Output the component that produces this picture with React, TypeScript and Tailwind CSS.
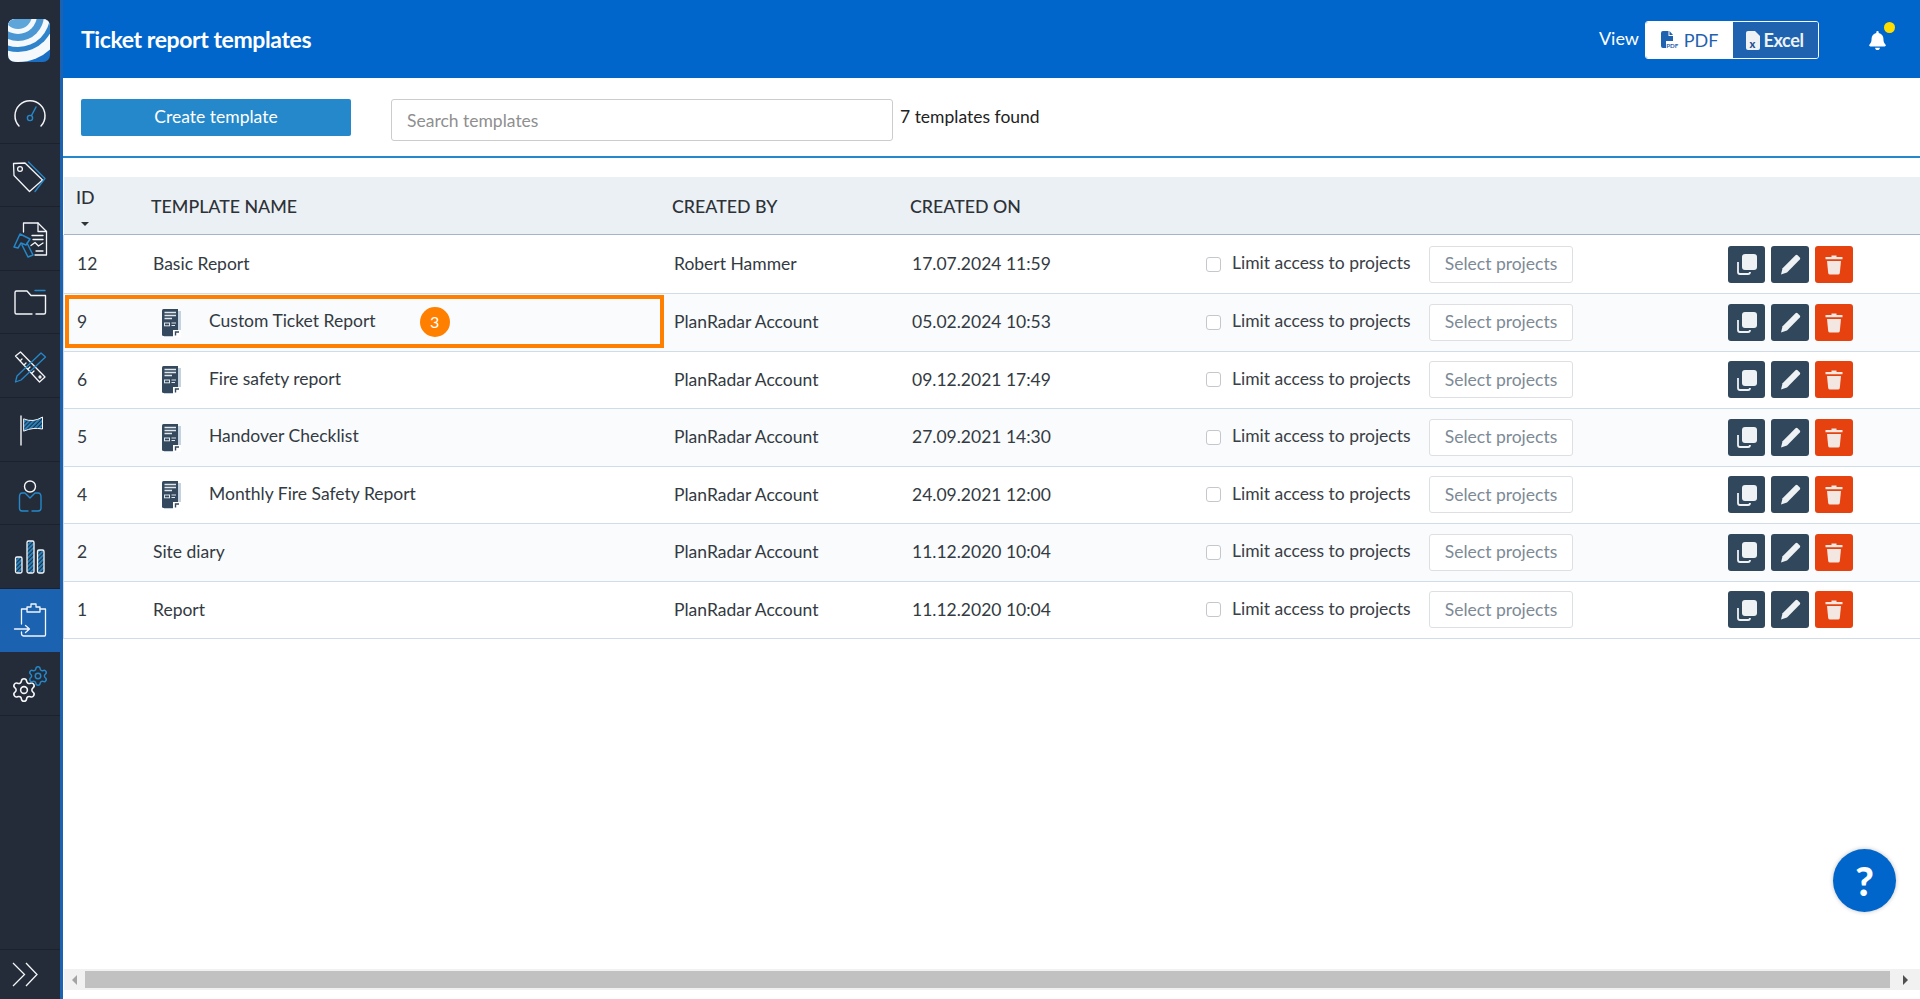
import React from 'react';
import { Settings } from 'lucide-react';
import { FaBell } from 'react-icons/fa';

const rows = [
  { id: '12', name: 'Basic Report', by: 'Robert Hammer', on: '17.07.2024 11:59', doc: false },
  { id: '9', name: 'Custom Ticket Report', by: 'PlanRadar Account', on: '05.02.2024 10:53', doc: true, mark: true },
  { id: '6', name: 'Fire safety report', by: 'PlanRadar Account', on: '09.12.2021 17:49', doc: true },
  { id: '5', name: 'Handover Checklist', by: 'PlanRadar Account', on: '27.09.2021 14:30', doc: true },
  { id: '4', name: 'Monthly Fire Safety Report', by: 'PlanRadar Account', on: '24.09.2021 12:00', doc: true },
  { id: '2', name: 'Site diary', by: 'PlanRadar Account', on: '11.12.2020 10:04', doc: false },
  { id: '1', name: 'Report', by: 'PlanRadar Account', on: '11.12.2020 10:04', doc: false },
];

const W = '#f4f6f8';
const B = '#2488ca';

const Hatch = ({ id }: { id: string }) => (
  <defs>
    <pattern id={id} width="3" height="3" patternUnits="userSpaceOnUse" patternTransform="rotate(45)">
      <rect width="3" height="3" fill="#252c39" />
      <rect width="1.8" height="3" fill={B} />
    </pattern>
  </defs>
);

const Ico = ({ children }: { children: React.ReactNode }) => (
  <svg width="60" height="64" viewBox="0 0 60 64" fill="none" strokeWidth="1.3" strokeLinecap="round" strokeLinejoin="round">
    {children}
  </svg>
);

const navIcons = [
  <Ico key="gauge">
    <path d="M19 46 A15 15 0 1 1 41 46" stroke={W} strokeWidth="1.5" />
    <path d="M31.5 35.5 L36 27" stroke={B} strokeWidth="1.5" />
    <circle cx="30" cy="38" r="2.6" stroke={B} strokeWidth="1.4" />
  </Ico>,
  <Ico key="tag">
    <path d="M13.5 19.5 L25 19 L42.5 36 L29.5 47.5 L14 31.5 Z" stroke={W} />
    <circle cx="20" cy="25" r="2.4" stroke={W} />
    <path d="M28.5 18 L45 34.5 L35 47.5" stroke={B} />
  </Ico>,
  <Ico key="doc">
    <path d="M23.5 25 V16 H38 L46.5 24.5 V48 H35" stroke={W} />
    <path d="M38 16 V24.5 H46.5 M32 28.5 H43 M33 32.5 H43 M36 44 H43" stroke={W} />
    <path d="M31 38.5 L35 35.5 L38.5 39 L43 36" stroke={W} />
    <path d="M14 40 L20 27 L30 32 L26 38 L21 36 L18 41 Z M22 38 L28 50 L33 48 L27 36" stroke={B} strokeWidth="1.5" />
  </Ico>,
  <Ico key="folder">
    <path d="M32 43 H16.5 Q15 43 15 41.5 V21.5 Q15 20 16.5 20 H27 L31 24.5 H45.5 V41.5 Q45.5 43 44 43 H36" stroke={W} strokeWidth="1.4" />
    <path d="M35 19.5 H45" stroke={B} strokeWidth="1.4" />
  </Ico>,
  <Ico key="ruler">
    <path d="M15.5 22 L20.5 18 L45 43 L39.5 48 Z M20 27 L22 25 M24 31 L26 29 M28 35 L30 33 M32 39 L34 37" stroke={W} />
    <path d="M41 19 L45.5 23 L21 46 L15.5 48 L17 42 Z" stroke={B} />
    <circle cx="40" cy="43" r="1" stroke={W} />
  </Ico>,
  <Ico key="flag">
    <Hatch id="h-flag" />
    <path d="M21 18 V47" stroke={W} strokeWidth="1.4" />
    <path d="M24 21 Q33 25 42.5 19 V31 Q33 29 24 33 Z" fill="url(#h-flag)" stroke={W} strokeWidth="1" />
  </Ico>,
  <Ico key="user">
    <circle cx="30" cy="24.5" r="5.5" stroke={W} strokeWidth="1.4" />
    <path d="M25 31 L30 36 L35 31 H38 Q41 31 41 35 V46 Q41 49 38 49 H32 M28 49 H22 Q19.5 49 19.5 46 V35 Q19.5 31 22 31 H25" stroke={B} strokeWidth="1.4" />
  </Ico>,
  <Ico key="bars">
    <Hatch id="h-bars" />
    <rect x="15.5" y="32" width="6.5" height="16" rx="1.5" fill="url(#h-bars)" stroke={W} />
    <rect x="27" y="16" width="7" height="32" rx="1.5" fill="url(#h-bars)" stroke={W} />
    <rect x="37.5" y="25" width="6.5" height="23" rx="1.5" fill="url(#h-bars)" stroke={W} />
  </Ico>,
  <Ico key="clip">
    <path d="M21.5 35 V20 H27 M40 20 H45.5 V46 Q45.5 47 44.5 47 H24 Q21.5 47 21.5 44.5 V43" stroke={W} />
    <path d="M27 23 V18 H31 V15 H36 V18 H40 V23 Z" stroke={W} />
    <path d="M14.5 40 H29 M25.5 36.5 L29.5 40 L25.5 43.5" stroke={W} />
  </Ico>,
  <Ico key="gears">
    <Settings x={10.5} y={24.5} width={27} height={27} color={W} strokeWidth={1.4} />
    <Settings x={27} y={13} width={22} height={22} color={B} strokeWidth={1.6} />
  </Ico>,
];

const Logo = () => (
  <svg width="42" height="43" viewBox="0 0 42 43">
    <defs>
      <clipPath id="logo-clip">
        <rect width="42" height="43" rx="7" />
      </clipPath>
    </defs>
    <g clipPath="url(#logo-clip)">
      <rect width="42" height="43" fill="#1a6fc4" />
      <circle cx="10" cy="-4" r="47" fill="#f5f9fc" />
      <circle cx="10" cy="-4" r="37" fill="#2f83cb" />
      <circle cx="10" cy="-4" r="32" fill="#f5f9fc" />
      <circle cx="10" cy="-4" r="26" fill="#4a97d4" />
      <circle cx="10" cy="-4" r="19" fill="#f5f9fc" />
      <circle cx="10" cy="-4" r="14" fill="#5ea5da" />
    </g>
  </svg>
);

const DocIcon = () => (
  <svg width="21" height="29" viewBox="0 0 21 29">
    <path d="M3 2 H20 V28 H3 Z" fill="#c3d2de" />
    <path d="M1 1.5 Q1 0 2.5 0 H17 V27 H2.5 Q1 27 1 25.5 Z" fill="#34495e" />
    <path d="M3.5 3.5 H15 M3.5 6.5 H15 M3.5 9.5 H11" stroke="#dfe6ec" strokeWidth="1.3" />
    <rect x="3.5" y="14" width="5" height="2.8" fill="none" stroke="#dfe6ec" strokeWidth="1" />
    <path d="M10.5 14 H15 M10.5 16.5 H14" stroke="#dfe6ec" strokeWidth="1" />
    <rect x="12" y="21" width="8" height="7" fill="#ffffff" />
    <path d="M14.5 26.5 V23 H18" fill="none" stroke="#34495e" strokeWidth="1.4" />
  </svg>
);

const CopyIcon = () => (
  <svg width="22" height="22" viewBox="0 0 22 22">
    <path d="M2 9 V19 Q2 21 4 21 H12 Q14 21 14 19" fill="none" stroke="#eef2f5" strokeWidth="1.8" />
    <rect x="6" y="1" width="15" height="16" rx="3" fill="#eef2f5" />
  </svg>
);

const PencilIcon = () => (
  <svg width="21" height="21" viewBox="0 0 21 21">
    <path d="M15.5 1.2 Q16.5 0.3 17.6 1.2 L19.8 3.4 Q20.7 4.5 19.8 5.5 L7 18.5 L1 20.5 L2.6 14.2 Z" fill="#eef2f5" />
  </svg>
);

const TrashIcon = () => (
  <svg width="18" height="21" viewBox="0 0 18 21">
    <path d="M6.5 1.5 H11.5 V3 H17.5 V5.2 H0.5 V3 H6.5 Z" fill="#f4e6e0" />
    <path d="M2 7 H16 L14.8 19 Q14.6 20.5 13 20.5 H5 Q3.4 20.5 3.2 19 Z" fill="#f4e6e0" />
  </svg>
);

const PdfIcon = () => (
  <svg width="18" height="18" viewBox="0 0 18 18">
    <path d="M0 2 Q0 0 2 0 H7.5 V5 H12 V10 H5 V17 H2 Q0 17 0 15 Z" fill="#1f62b0" />
    <path d="M8.5 0 L12 4 H8.5 Z" fill="#1f62b0" />
    <text x="5.2" y="17" fontSize="6.2" fontWeight="700" fill="#1f62b0" fontFamily="Lato, sans-serif">PDF</text>
  </svg>
);

const XlsIcon = () => (
  <svg width="14" height="19" viewBox="0 0 14 19">
    <path d="M0 2 Q0 0 2 0 H9 L14 5 V17 Q14 19 12 19 H2 Q0 19 0 17 Z" fill="#eef2f5" />
    <text x="3.5" y="16.5" fontSize="11" fontWeight="900" fill="#1f4f8f" fontFamily="Lato, sans-serif">x</text>
  </svg>
);

export default function App() {
  return (
    <div className="relative flex h-[999px] w-[1920px] overflow-hidden bg-white font-['Lato',sans-serif] text-[17.5px] text-[#333a42]">
      {/* Sidebar */}
      <aside className="flex w-[63px] shrink-0 flex-col border-r-[3px] border-[#1b62b1] bg-[#252c39]">
        <div className="flex h-[80px] items-start pl-[8px] pt-[19px]">
          <Logo />
        </div>
        {navIcons.map((icon, i) => (
          <div
            key={i}
            className={
              i === 8
                ? 'h-[63.6px] bg-[#1b62b1]'
                : 'h-[63.6px] border-b border-[#1c212b]'
            }
          >
            {icon}
          </div>
        ))}
        <div className="mt-auto flex h-[50px] items-center border-t border-[#1c212b] pl-[12px]">
          <svg width="26" height="25" viewBox="0 0 26 25" fill="none" stroke={W} strokeWidth="1.3">
            <path d="M1 1 L12.5 12.5 L1 24 M14 1 L25 12.5 L14 24" />
          </svg>
        </div>
      </aside>

      <main className="flex min-w-0 flex-1 flex-col">
        {/* Header */}
        <header className="flex h-[78px] shrink-0 items-center bg-[#0066cc] pl-[18px] text-white">
          <h1 className="text-[23px] font-bold leading-none tracking-[-0.4px]">Ticket report templates</h1>
          <div className="ml-auto mt-[2px] flex items-center">
            <span className="mb-[3px] mr-[6px] text-[18px]">View</span>
            <div className="flex h-[38px] w-[174px] overflow-hidden rounded-[3px] border border-white">
              <div className="flex w-[87px] items-center justify-center gap-[5px] bg-white text-[18px] text-[#1f62b0]">
                <PdfIcon />
                <span>PDF</span>
              </div>
              <div className="flex flex-1 items-center justify-center gap-[4px] bg-[#1f62b0] pr-[2px] text-[18px] font-bold tracking-[-0.4px] text-[#eef2f5]">
                <XlsIcon />
                <span>Excel</span>
              </div>
            </div>
            <div className="relative ml-[50px] mr-[34px]">
              <FaBell className="h-[19px] w-[17px] text-white" />
              <span className="absolute -right-[9px] -top-[9px] h-[11px] w-[11px] rounded-full bg-[#ffdd00]" />
            </div>
          </div>
        </header>

        {/* Toolbar */}
        <div className="flex h-[80px] shrink-0 items-start border-b-2 border-[#2488ca] pl-[18px] pt-[21px]">
          <button className="h-[37px] w-[270px] rounded-[2px] bg-[#2488ca] pb-[1px] text-[17.5px] text-white">Create template</button>
          <input
            readOnly
            placeholder="Search templates"
            className="ml-[40px] h-[42px] w-[502px] rounded-[3px] border border-[#cccccc] px-[15px] text-[17.5px] placeholder:text-[#8f8f8f]"
          />
          <span className="ml-[7px] mt-[6px] leading-[24px] text-[#222222]">7 templates found</span>
        </div>

        {/* Table */}
        <div className="ml-[1px] mt-[19px] flex h-[58px] shrink-0 items-center border-b border-[#a3b6c9] bg-[#ebf0f5] pt-[1px] text-[17.8px] font-medium text-[#2d3238]">
          <div className="relative h-full w-[87px]">
            <span className="absolute left-[12px] top-[6px]">ID</span>
            <span className="absolute left-[17px] top-[44px] h-0 w-0 border-x-[4px] border-t-[4px] border-x-transparent border-t-[#333333]" />
          </div>
          <div className="w-[521px]">TEMPLATE NAME</div>
          <div className="w-[238px]">CREATED BY</div>
          <div>CREATED ON</div>
        </div>

        {rows.map((r, i) => (
          <div
            key={r.id}
            className={`grid shrink-0 grid-cols-[87px_521px_238px_296px_223px_299px_1fr] items-center border-b border-l border-[#d0dde8] ${
              i === 0 ? 'h-[59px]' : 'h-[57.5px]'
            } ${i % 2 === 1 ? 'bg-[#f9fbfd]' : 'bg-white'}`}
          >
            <div className="pl-[13px]">{r.id}</div>
            <div className="relative flex h-full items-center pl-[2px]">
              {r.doc && (
                <span className="ml-[8px] mr-[27px] mt-[2px]">
                  <DocIcon />
                </span>
              )}
              <span className={r.doc ? 'mb-[2px]' : ''}>{r.name}</span>
              {r.mark && (
                <span className="ml-[44px] flex h-[30px] w-[30px] items-center justify-center rounded-full bg-[#ff7f00] text-[16px] text-white">
                  3
                </span>
              )}
              {r.mark && (
                <span className="absolute -left-[86px] bottom-[3px] right-[8px] top-[1px] border-4 border-[#ff7f00]" />
              )}
            </div>
            <div className="pl-[2px]">{r.by}</div>
            <div className="pl-[2px]">{r.on}</div>
            <div className="flex items-center">
              <span className="h-[15px] w-[15px] rounded-[3px] border border-[#c4c8cc] bg-white" />
              <span className="mb-[2px] ml-[11px] text-[#3a4046]">Limit access to projects</span>
            </div>
            <div>
              <div className="flex h-[37px] w-[144px] items-center justify-center rounded-[3px] border border-[#dddfe2] bg-white text-[#7d8a96]">
                Select projects
              </div>
            </div>
            <div className="flex gap-[6px]">
              <span className="flex h-[37px] w-[37px] items-center justify-center rounded-[3px] bg-[#31475b]">
                <CopyIcon />
              </span>
              <span className="flex h-[37px] w-[38px] items-center justify-center rounded-[3px] bg-[#31475b]">
                <PencilIcon />
              </span>
              <span className="flex h-[37px] w-[38px] items-center justify-center rounded-[3px] bg-[#e5420f]">
                <TrashIcon />
              </span>
            </div>
          </div>
        ))}

        {/* Scrollbar */}
        <div className="mb-[9px] ml-[1px] mt-auto flex h-[21px] shrink-0 items-center bg-[#f1f1f1]">
          <div className="flex w-[21px] justify-center">
            <span className="h-0 w-0 border-y-[5px] border-r-[5px] border-y-transparent border-r-[#a3a3a3]" />
          </div>
          <div className="h-[17px] flex-1 bg-[#c1c1c1]" />
          <div className="flex w-[30px] justify-center">
            <span className="h-0 w-0 border-y-[5px] border-l-[5px] border-y-transparent border-l-[#505050]" />
          </div>
        </div>
      </main>

      {/* Help button */}
      <div className="absolute left-[1833px] top-[849px] flex h-[63px] w-[63px] items-center justify-center rounded-full bg-[#0066cc] text-[40px] font-black leading-none text-white shadow-[0_0_4px_rgba(0,0,0,0.25)]">
        ?
      </div>
    </div>
  );
}
